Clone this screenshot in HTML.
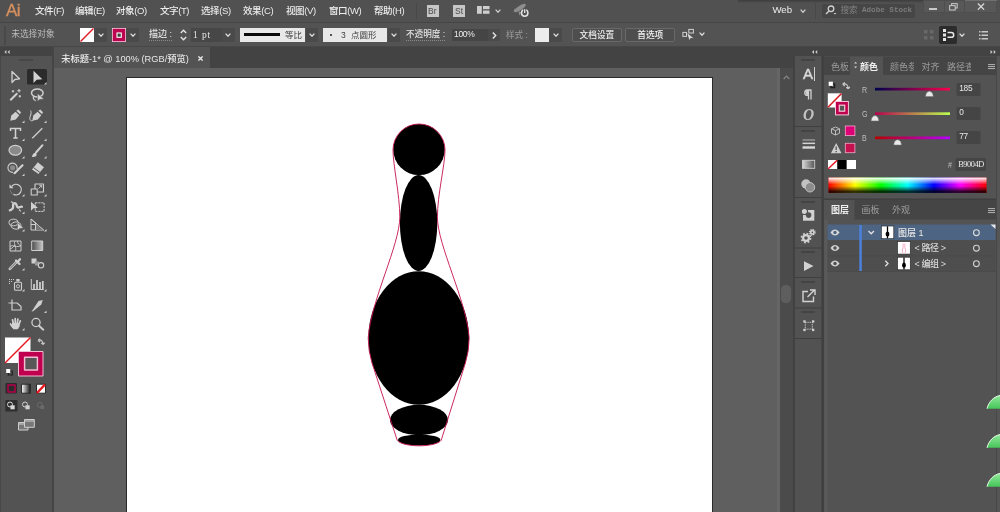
<!DOCTYPE html>
<html lang="zh-CN">
<head>
<meta charset="utf-8">
<title>未标题-1* @ 100% (RGB/预览)</title>
<style>
*{box-sizing:border-box;margin:0;padding:0}
html,body{width:1000px;height:512px;overflow:hidden;background:#535353}
body{position:relative;font-family:"Liberation Sans","Noto Sans CJK SC",sans-serif;font-size:11px;color:#dcdcdc;line-height:1}
.abs,.abs>*{position:absolute}
.abs{will-change:transform}
.t{position:absolute;white-space:nowrap;line-height:14px;height:14px}
#menubar{left:0;top:0;width:1000px;height:22px;background:#515151}
#ctrlbar{left:0;top:22px;width:1000px;height:25px;background:#535353;border-top:1px solid #454545;border-bottom:1px solid #474747}
#tabbar{left:53px;top:47px;width:740px;height:21px;background:#434343}
#tools{left:0;top:47px;width:54px;height:465px;background:#535353;border-right:2px solid #454545;box-shadow:inset 1px 0 0 #484848}
#canvas{left:54px;top:68px;width:726px;height:444px;background:#5f5f5f}
#vscroll{left:780px;top:68px;width:13px;box-shadow:-3px 0 0 #656565;height:444px;background:#4b4b4b}
#dock{left:793px;top:47px;width:207px;height:465px;background:#535353}
.m{top:4px;font-size:9.5px;letter-spacing:-.4px;color:#ececec;font-weight:500}
.c{top:5px;font-size:10px;color:#dcdcdc}
.chev{position:absolute;width:6px;height:4.300px;margin:.4px 0 0 .5px}
.dd{position:absolute;top:5px;height:14px;background:#4a4a4a}
.p0{font-size:9px;color:#9c9c9c}
.p1{font-size:9px;color:#f0f0f0;font-weight:bold}
.lb{font-size:8.400px;color:#bdbdbd;transform:scaleX(.85);transform-origin:0 0}
.nv{font-size:8.300px;letter-spacing:-.2px;color:#e8e8e8}
.hx{font-family:"Liberation Serif","Noto Serif CJK SC",serif;font-size:8.300px;letter-spacing:-.4px;color:#ececec}
.ly{font-size:9px;color:#dadada;font-weight:500}
</style>
</head>
<body>

<!-- MENU BAR -->
<div id="menubar" class="abs">
  <span class="t" style="left:6px;top:1.800px;font-size:17px;line-height:18px;height:18px;color:#d6905f;letter-spacing:-.5px;-webkit-text-stroke:.35px #d6905f">Ai</span>
  <span class="t m" style="left:35px">文件(F)</span>
  <span class="t m" style="left:75px">编辑(E)</span>
  <span class="t m" style="left:116px">对象(O)</span>
  <span class="t m" style="left:160px">文字(T)</span>
  <span class="t m" style="left:201px">选择(S)</span>
  <span class="t m" style="left:243px">效果(C)</span>
  <span class="t m" style="left:286px">视图(V)</span>
  <span class="t m" style="left:329px">窗口(W)</span>
  <span class="t m" style="left:374px">帮助(H)</span>
  <div style="left:416px;top:3px;width:1px;height:16px;background:#474747"></div>
  <div style="left:426.500px;top:5px;width:12.500px;height:12px;background:#c6c6c6"></div>
  <span class="t" style="left:428px;top:4px;font-size:8.500px;color:#4a4a4a">Br</span>
  <div style="left:452.800px;top:5px;width:12.500px;height:12px;background:#c6c6c6"></div>
  <span class="t" style="left:455px;top:4px;font-size:8.500px;color:#4a4a4a">St</span>
  <svg style="left:476.500px;top:6px" width="13" height="8" viewBox="0 0 13 8"><rect x="0" y="0" width="4.800" height="7.800" fill="#cdcdcd"/><rect x="6" y="0" width="6.500" height="3.200" fill="#cdcdcd"/><rect x="6" y="4.500" width="6.500" height="3.300" fill="#cdcdcd"/></svg>
  <svg class="chev" style="left:494.600px;top:8.500px" viewBox="0 0 7 5"><path d="M.7.8 3.5 3.8 6.3.8" fill="none" stroke="#d0d0d0" stroke-width="1.4"/></svg>
  <svg style="left:512px;top:2px" width="19" height="17" viewBox="512 2 19 17"><g fill="#8e8e8e"><ellipse cx="520" cy="8" rx="6.800" ry="2.200" transform="rotate(-33 520 8)"/><path d="M515 8.300l-1.600 3.200 3.800-.6zM518.500 11l.6 4.600 2.400-3.200z"/></g><circle cx="524.700" cy="13" r="3.200" fill="#535353" stroke="#e2e2e2" stroke-width="1.500"/><path d="M524.700 9v4" stroke="#535353" stroke-width="3"/><path d="M524.700 9.200v3.800" stroke="#e2e2e2" stroke-width="1.300"/></svg>

  <span class="t" style="left:772.500px;top:2.500px;font-size:9.700px;letter-spacing:-.1px;color:#ececec">Web</span>
  <svg class="chev" style="left:799.500px;top:9px" viewBox="0 0 7 5"><path d="M.7.8 3.5 3.8 6.3.8" fill="none" stroke="#d0d0d0" stroke-width="1.4"/></svg>
  <div style="left:815px;top:3px;width:1px;height:16px;background:#474747"></div>
  <div style="left:822px;top:4px;width:93px;height:14px;background:#464646;border-radius:2px"></div>
  <svg style="left:825px;top:5.300px" width="12" height="10" viewBox="0 0 12 10"><circle cx="6" cy="3.8" r="2.8" fill="none" stroke="#d0d0d0" stroke-width="1.3"/><path d="M4 6 1 9" stroke="#d0d0d0" stroke-width="1.5"/><path d="M8.5 8h3l-1.5 1.6z" fill="#d0d0d0"/></svg>
  <span class="t" style="left:840.500px;top:2.700px;font-size:8.600px;color:#828282">搜索</span><span class="t" style="left:862px;top:2.700px;font-size:7.600px;font-family:'Liberation Mono',monospace;font-weight:bold;color:#7c7c7c">Adobe Stock</span>
  <div style="left:738px;top:0;width:185px;height:2.500px;background:linear-gradient(#3c3c3c,rgba(60,60,60,0))"></div>
  <div style="left:922.500px;top:0;width:74.500px;height:13px;background:#585858;box-shadow:inset 0 0 0 1px #4e4e4e"></div>
  <div style="left:964px;top:0;width:33px;height:1px;background:#707070"></div>
  <div style="left:943.500px;top:0;width:1px;height:13px;background:#4e4e4e"></div><div style="left:963.500px;top:0;width:1px;height:13px;background:#4e4e4e"></div>
  <div style="left:929px;top:8px;width:8px;height:2px;background:#c8c8c8"></div>
  <svg style="left:949px;top:3.300px" width="8.800" height="7.900" viewBox="0 0 10 9"><rect x="3" y=".7" width="6.3" height="5" fill="none" stroke="#c8c8c8" stroke-width="1.2"/><rect x=".7" y="3" width="6.3" height="5" fill="#585858" stroke="#c8c8c8" stroke-width="1.2"/></svg>
  <svg style="left:976.500px;top:2.800px" width="8" height="7.200" viewBox="0 0 9 8"><path d="M1 .5 8 7.5M8 .5 1 7.5" stroke="#d8d8d8" stroke-width="1.4"/></svg>
</div>

<!-- CONTROL BAR -->
<div id="ctrlbar" class="abs">
  <div style="left:4px;top:3px;width:2px;height:19px;background:#494949"></div>
  <span class="t c" style="left:11.200px;top:4.200px;color:#bdbdbd;font-size:8.700px">未选择对象</span>
  <div class="dd" style="left:94px;width:13px"></div>
  <svg style="left:80px;top:5px" width="14" height="14" viewBox="0 0 14 14"><rect width="14" height="14" fill="#fff"/><path d="M.5 13.500 13.500.5" stroke="#e0202a" stroke-width="1.500"/></svg>
  <svg class="chev" style="left:97.500px;top:9.700px" viewBox="0 0 7 5"><path d="M.7.8 3.500 3.800 6.300.8" fill="none" stroke="#e4e4e4" stroke-width="1.400"/></svg>
  <div class="dd" style="left:126px;width:13px"></div>
  <svg style="left:112px;top:5px" width="14" height="14" viewBox="0 0 14 14"><rect width="14" height="14" fill="#f4c6d8"/><rect x=".8" y=".8" width="12.400" height="12.400" fill="#bb034f"/><rect x="5" y="5" width="4.300" height="4.300" fill="#444" stroke="#fff" stroke-width="1.100"/></svg>
  <svg class="chev" style="left:129.500px;top:9.700px" viewBox="0 0 7 5"><path d="M.7.8 3.500 3.800 6.300.8" fill="none" stroke="#e4e4e4" stroke-width="1.400"/></svg>
  <span class="t c" style="left:149px;font-size:9px;font-weight:500;color:#e2e2e2;border-bottom:1px dotted #8a8a8a;height:13px;line-height:13px">描边 :</span>
  <svg style="left:180px;top:6px" width="7" height="12" viewBox="0 0 7 12"><path d="M.8 4 3.500 1.200 6.200 4M.8 8 3.500 10.800 6.200 8" fill="none" stroke="#e6e6e6" stroke-width="1.300"/></svg>
  <div style="left:190.500px;top:5px;width:31px;height:14px;background:#474747"></div>
  <span class="t c" style="left:193px;font-family:'Liberation Serif','Noto Serif CJK SC',serif;font-size:9.500px;letter-spacing:.9px;color:#e6e6e6">1 pt</span>
  <div class="dd" style="left:222px;width:13px"></div>
  <svg class="chev" style="left:224.500px;top:9.700px" viewBox="0 0 7 5"><path d="M.7.8 3.500 3.800 6.300.8" fill="none" stroke="#e4e4e4" stroke-width="1.400"/></svg>
  <div style="left:240px;top:5px;width:65px;height:14px;background:#e8e8e8"></div>
  <div style="left:244px;top:10.400px;width:36px;height:2.600px;background:#0a0a0a"></div>
  <span class="t c" style="left:285px;color:#3c3c3c;font-size:8.500px">等比</span>
  <div class="dd" style="left:306px;width:12px"></div>
  <svg class="chev" style="left:308.700px;top:9.700px" viewBox="0 0 7 5"><path d="M.7.8 3.500 3.800 6.300.8" fill="none" stroke="#e4e4e4" stroke-width="1.400"/></svg>
  <div style="left:323px;top:5px;width:64px;height:14px;background:#e8e8e8"></div>
  <div style="left:329.700px;top:11px;width:2px;height:2px;background:#222;border-radius:1px"></div>
  <span class="t c" style="left:341px;color:#3c3c3c;font-size:8.500px">3</span>
  <span class="t c" style="left:351px;color:#3c3c3c;font-size:8.500px">点圆形</span>
  <div class="dd" style="left:388px;width:12px"></div>
  <svg class="chev" style="left:390.200px;top:9.700px" viewBox="0 0 7 5"><path d="M.7.8 3.500 3.800 6.300.8" fill="none" stroke="#e4e4e4" stroke-width="1.400"/></svg>
  <span class="t c" style="left:406px;font-size:8.600px;font-weight:500;color:#e2e2e2;border-bottom:1px dotted #8a8a8a;height:13px;line-height:13px">不透明度 :</span>
  <div style="left:452px;top:5.500px;width:36px;height:12.500px;background:#454545"></div>
  <span class="t c" style="left:454px;top:4px;font-size:8.500px;letter-spacing:-.3px;color:#ececec">100%</span>
  <div class="dd" style="left:488px;width:12px;top:5.500px;height:12.500px"></div>
  <svg style="left:492.300px;top:9px" width="5" height="7" viewBox="0 0 5 7"><path d="M.8.600 3.700 3.500 .8 6.400" fill="none" stroke="#e4e4e4" stroke-width="1.400"/></svg>
  <span class="t c" style="left:506px;color:#9c9c9c;font-size:8.600px">样式 :</span>
  <div style="left:535px;top:5px;width:14px;height:14px;background:#ececec"></div>
  <div class="dd" style="left:549px;width:13px"></div>
  <svg class="chev" style="left:552.800px;top:9.700px" viewBox="0 0 7 5"><path d="M.7.800 3.500 3.800 6.300.8" fill="none" stroke="#e4e4e4" stroke-width="1.400"/></svg>
  <div style="left:572px;top:4.500px;width:50px;height:14.500px;border:1px solid #696969;border-radius:2px;background:#4e4e4e"></div>
  <span class="t c" style="left:579.500px;font-size:8.700px;font-weight:500;color:#f0f0f0">文档设置</span>
  <div style="left:625px;top:4.500px;width:50px;height:14.500px;border:1px solid #696969;border-radius:2px;background:#4e4e4e"></div>
  <span class="t c" style="left:637.200px;font-size:8.700px;font-weight:500;color:#f0f0f0">首选项</span>
  <svg style="left:682px;top:4.500px" width="13" height="13" viewBox="0 0 13 13"><rect x=".9" y="4.400" width="3.600" height="4" fill="none" stroke="#d0d0d0" stroke-width="1"/><rect x="6.800" y="1.400" width="4.600" height="3.600" fill="none" stroke="#d0d0d0" stroke-width="1"/><path d="M5.300 5.300v7l1.800-1.700 2.600 1.400z" fill="#dcdcdc" transform="rotate(-18 5.300 5.300)"/></svg>
  <svg class="chev" style="left:698.200px;top:8.800px" viewBox="0 0 7 5"><path d="M.7.800 3.500 3.800 6.300.8" fill="none" stroke="#e4e4e4" stroke-width="1.400"/></svg>

  <svg style="left:924px;top:7px" width="10" height="10" viewBox="0 0 10 10"><g fill="#686868"><rect x="0" y="0" width="3.500" height="3.500"/><rect x="6" y="0" width="3.500" height="3.500"/><rect x="0" y="6" width="3.500" height="3.500"/><rect x="6" y="6" width="3.500" height="3.500"/></g></svg>
  <div style="left:939px;top:2.500px;width:18px;height:18px;background:#2c2c2c;border-radius:2px"></div>
  <svg style="left:942.500px;top:5.500px" width="12" height="12" viewBox="0 0 12 12"><g fill="#e6e6e6"><rect x="0" y="0" width="3" height="3"/><rect x="0" y="4.500" width="3" height="3"/><rect x="0" y="9" width="3" height="3"/></g><path d="M4.500 3.500h3.800a2.300 2.300 0 0 1 0 4.800H4.500" fill="none" stroke="#e6e6e6" stroke-width="1.500"/></svg>
  <svg class="chev" style="left:958.500px;top:9.700px" viewBox="0 0 7 5"><path d="M.7.800 3.500 3.800 6.300.8" fill="none" stroke="#e4e4e4" stroke-width="1.400"/></svg>
  <svg style="left:978.500px;top:7.500px" width="9" height="9" viewBox="0 0 9 9"><g fill="#c8c8c8"><rect x="0" y="0" width="1.500" height="1.500"/><rect x="0" y="3.500" width="1.500" height="1.500"/><rect x="0" y="7" width="1.500" height="1.500"/><rect x="2.500" y="0" width="6.500" height="1.500"/><rect x="2.500" y="3.500" width="6.500" height="1.500"/><rect x="2.500" y="7" width="6.500" height="1.500"/></g></svg>
</div>

<!-- TAB BAR -->
<div id="tabbar" class="abs">
  <div style="left:1px;top:0;width:156px;height:21px;background:#535353"></div>
  <span class="t" style="left:8.200px;top:4.600px;font-size:9.250px;font-weight:500;color:#e8e8e8">未标题-1* @ 100% (RGB/预览)</span>
  <svg style="left:144.500px;top:9px" width="5" height="5" viewBox="0 0 5 5"><path d="M.4.400 4.600 4.600M4.600.4.400 4.600" stroke="#ececec" stroke-width="1.300"/></svg>
</div>

<!-- CANVAS -->
<div id="canvas" class="abs">
  <div style="left:72px;top:9px;width:587px;height:440px;background:#fff;border:1px solid #2a2a2a"></div>
  <svg style="left:0;top:0" width="726" height="444" viewBox="54 68 726 444">
    <g fill="#000">
      <ellipse cx="419" cy="149.500" rx="25.800" ry="25.600"/>
      <ellipse cx="418.600" cy="223" rx="18.700" ry="48"/>
      <ellipse cx="418.700" cy="338" rx="50.300" ry="66.800"/>
      <ellipse cx="419" cy="420" rx="29" ry="15.200"/>
      <ellipse cx="419.200" cy="440" rx="21.200" ry="5.500"/>
    </g>
    <path d="M393 150 A26 26 0 0 1 445 150 C445 165 437.400 195 437.400 217 C437.400 245 466.400 300 469.200 338 A50.500 67 0 0 1 465.400 363 L441.600 439 A22.400 6.800 0 0 1 396.800 439 L372 363 A50.500 67 0 0 1 368.200 338 C371 300 399.800 245 399.800 217 C399.800 195 393 165 393 150 Z" fill="none" stroke="#c4124f" stroke-width=".9"/>
  </svg>
</div>

<!-- V SCROLL -->
<div id="vscroll" class="abs">
  <svg style="left:2.800px;top:6.500px" width="7" height="5" viewBox="0 0 7 5"><path d="M.7 4 3.500 1.200 6.300 4" fill="none" stroke="#858585" stroke-width="1.200"/></svg>
  <div style="left:1.300px;top:217.400px;width:10.200px;height:18px;background:#5e5e5e;border-radius:4.500px"></div>
</div>

<!-- TOOLS -->
<div id="tools" class="abs">
  <div style="left:0;top:0;width:52px;height:9px;background:#434343"></div>
  <svg style="left:4px;top:3px" width="6" height="4" viewBox="0 0 6 4"><path d="M2.4 0 .4 2l2 2zM5.6 0l-2 2 2 2z" fill="#cfcfcf"/></svg>
  <div style="left:19px;top:12px;width:14px;height:2px;background:#474747"></div>
  <svg style="left:0;top:0" width="52" height="465" viewBox="0 47 52 465" fill="none" stroke-linejoin="round">
  <!-- selected box -->
  <rect x="27" y="69" width="20" height="15.5" rx="1.5" fill="#2b2b2b"/>
  <!-- flyout triangles -->
  <g fill="#d0d0d0">
    <path d="M46.5 82v2.5H44z"/>
    <path d="M24.5 120.5v2.5H22z"/><path d="M46.500 120.5v2.5H44z"/>
    <path d="M24.5 138.5v2.5H22z"/><path d="M46.5 138.5v2.5H44z"/>
    <path d="M24.5 156v2.500H22z"/><path d="M46.5 156v2.5H44z"/>
    <path d="M24.5 173.5v2.500H22z"/><path d="M46.5 173.5v2.5H44z"/>
    <path d="M24.5 194v2.500H22z"/><path d="M46.5 194v2.5H44z"/>
    <path d="M24.5 211.500v2.5H22z"/>
    <path d="M24.5 229v2.5H22z"/><path d="M46.5 229v2.5H44z"/>
    <path d="M24.5 268v2.5H22z"/>
    <path d="M24.5 289v2.5H22z"/><path d="M46.5 289v2.5H44z"/>
    <path d="M46.5 310.500v2.5H44z"/>
    <path d="M24.5 328v2.5H22z"/>
  </g>
  <!-- row1: selection (hollow) / direct selection (filled) -->
  <path d="M12 71.500 L12 82.500 L14.800 79.500 L19.500 78.800 Z" stroke="#cfcfcf" stroke-width="1.300"/>
  <path d="M33.500 70.800 L33.500 83 L36.700 79.800 L42.300 79.200 Z" fill="#d2d2d2"/>
  <!-- row2: magic wand / lasso -->
  <path d="M10.300 100.200 L17.300 93.200" stroke="#cfcfcf" stroke-width="2"/>
  <path d="M19 89v3.400M17.300 90.700h3.400M13 90v2.400M11.800 91.200h2.400M19.800 95v2.400M18.600 96.200h2.400" stroke="#cfcfcf" stroke-width="1.100"/>
  <ellipse cx="37.300" cy="93" rx="5.800" ry="3.900" stroke="#cfcfcf" stroke-width="1.500"/>
  <path d="M33.800 96c-1.200 2-.3 4 2 4.600" stroke="#cfcfcf" stroke-width="1.200"/>
  <path d="M37.500 93.500 L37.500 101.500 L39.600 99.400 L44 99 Z" fill="#d2d2d2" stroke="#535353" stroke-width=".5"/>
  <!-- row3: pen / curvature -->
  <path d="M10.300 120.800 L11.300 115.500 L15.500 111.800 L19.300 115.200 L15.800 119.600 Z" fill="#cfcfcf"/>
  <path d="M16.300 110.800 L18.300 109.600 L21 112.300 L20 114.200 Z" fill="#cfcfcf"/>
  <path d="M32.300 120.800 L33.300 115.500 L37.500 111.800 L41.300 115.200 L37.800 119.600 Z" fill="#cfcfcf"/>
  <path d="M38.300 110.800 L40.300 109.600 L43 112.300 L42 114.200 Z" fill="#cfcfcf"/>
  <path d="M30.500 110.500c2 3-1.500 6-.5 9 .6 1.500 2 1.500 3 1" stroke="#cfcfcf" stroke-width="1"/>
  <!-- row4: T / line -->
  <path d="M10.500 131v-2.500h10v2.500M15.500 128.500v9.500M13.300 138h4.400" stroke="#d2d2d2" stroke-width="1.500" stroke-linejoin="miter"/>
  <path d="M32.300 138.300 L42.300 128.200" stroke="#cfcfcf" stroke-width="1.300"/>
  <!-- row5: ellipse / brush -->
  <ellipse cx="15.300" cy="150.300" rx="6.300" ry="4.900" fill="#8a8a8a" stroke="#cfcfcf" stroke-width="1.200"/>
  <path d="M36 152.500 L42.500 145.200" stroke="#cfcfcf" stroke-width="2" stroke-linecap="round"/>
  <path d="M32 157c.3-2.500 1.600-4.200 3.600-4.300 1.400 1.200 1.300 2.700.2 3.600-1.100.8-2.500.9-3.800.7z" fill="#d2d2d2"/>
  <!-- row6: shaper / eraser -->
  <path d="M13 172.300 a4.600 4.600 0 1 1 4-3.500" stroke="#cfcfcf" stroke-width="1.100"/>
  <circle cx="12.600" cy="167.800" r="2.600" fill="#8a8a8a"/>
  <path d="M14.500 173.200 L22.500 165.300" stroke="#d2d2d2" stroke-width="2.200" stroke-linecap="round"/>
  <path d="M37.800 162.300 L44 167.200 L38.500 174 L32 169.400 Z" fill="#cfcfcf"/>
  <path d="M33.800 167.800 L39.800 172.300" stroke="#535353" stroke-width="1"/>
  <!-- row7: rotate / scale -->
  <path d="M11.800 186.300 A5.300 5.300 0 1 1 13.500 194.300" stroke="#cfcfcf" stroke-width="1.300"/><path d="M13.500 194.300 A5.300 5.300 0 0 1 10.200 190" stroke="#9a9a9a" stroke-width="1.100" stroke-dasharray="1 1"/>
  <path d="M9.500 184.300v4h4z" fill="#cfcfcf"/>
  <rect x="35" y="184" width="8.500" height="8" stroke="#cfcfcf" stroke-width="1.100"/>
  <rect x="31.200" y="189" width="6" height="6" fill="#535353" stroke="#cfcfcf" stroke-width="1.100"/>
  <path d="M38.500 188.500l3-3M39.300 185.300h2.400v2.400" stroke="#cfcfcf" stroke-width=".9"/>
  <!-- row8: warp / free transform -->
  <path d="M9.800 210.300c2.600-.6 3.600-2.400 3.300-4.600-.3-1.700 1-3 2.500-2.200 1.500.8.600 3.300 2.300 3.900 1.700.6 2.600-1.200 4-.6" stroke="#cfcfcf" stroke-width="2.300" stroke-linecap="round"/>
  <path d="M13 203l-1.800-1.500M19 209.500l1.800 1.800" stroke="#cfcfcf" stroke-width="1.100"/>
  <rect x="35.300" y="202.800" width="8.800" height="8.600" stroke="#cfcfcf" stroke-width="1" stroke-dasharray="2.200 .8"/>
  <path d="M31 201.800 L31 210.800 L33.500 208.300 L38 208 Z" fill="#d2d2d2"/>
  <!-- row9: shape builder / perspective -->
  <ellipse cx="13.500" cy="222.500" rx="4.500" ry="3.300" stroke="#cfcfcf" stroke-width="1"/>
  <ellipse cx="16" cy="225.500" rx="5" ry="3.600" stroke="#cfcfcf" stroke-width="1"/>
  <path d="M17.500 222.500 L17.500 230.500 L19.600 228.400 L23.500 228 Z" fill="#d2d2d2" stroke="#535353" stroke-width=".4"/>
  <path d="M31 219v11l12.500 0zM31 224.500l6.300 0M35.500 222.800v7.200M31 219l12.500 11" stroke="#cfcfcf" stroke-width="1"/>
  <path d="M36 223.500 L43 230 L36 230z" fill="#777"/>
  <!-- row10: mesh / gradient -->
  <rect x="10" y="241" width="11" height="10" stroke="#cfcfcf" stroke-width="1"/>
  <path d="M10 246.500c3-2.500 7 2 11-1M15 241c-2 3.500 2.500 6.500 0 10M10 249c3-1 4-3 5-4M17.500 241c0 3 2 4 3.500 5" stroke="#cfcfcf" stroke-width=".9"/>
  <rect x="31.700" y="241" width="11" height="9.500" fill="url(#tg)" stroke="#cfcfcf" stroke-width="1"/>
  <!-- row11: eyedropper / blend -->
  <path d="M9.800 268.800 L16.500 262" stroke="#cfcfcf" stroke-width="2.600" stroke-linecap="round"/>
  <path d="M10.300 268.300 L16 262.500" stroke="#535353" stroke-width=".9" stroke-linecap="round"/>
  <path d="M16 260.500l3.500 3.500M17.500 262 L20 259.300" stroke="#cfcfcf" stroke-width="2.300" stroke-linecap="round"/>
  <rect x="31.500" y="258.500" width="5" height="5" fill="#cfcfcf"/>
  <rect x="35" y="261.500" width="4" height="4" fill="#9a9a9a"/>
  <circle cx="41" cy="265.300" r="2.700" fill="#535353" stroke="#cfcfcf" stroke-width="1.100"/>
  <!-- row12: symbol sprayer / graph -->
  <rect x="14.500" y="282.300" width="7" height="8" rx="1" stroke="#cfcfcf" stroke-width="1.100"/>
  <rect x="16.300" y="279" width="3.300" height="2.500" fill="#cfcfcf"/>
  <circle cx="18" cy="286.300" r="1.600" stroke="#cfcfcf" stroke-width=".9"/>
  <path d="M9 279.500h1M11 279.500h1M13 279.500h1M9 281.500h1M11 281.500h1M9 283.500h1" stroke="#cfcfcf" stroke-width="1"/>
  <path d="M31.300 279v10.500h12.500" stroke="#cfcfcf" stroke-width="1"/>
  <path d="M34 289v-5M37 289v-9M40 289v-7M42.800 289v-8" stroke="#cfcfcf" stroke-width="1.700"/>
  <!-- row13: artboard / slice -->
  <path d="M12 299.500v10.500h9M8.500 303h8.500l4 3.500v4" stroke="#cfcfcf" stroke-width="1.200"/>
  <path d="M31.500 311.800 L38.500 301 L42.800 300 L41.300 304.500 L33.500 311 Z" fill="#cfcfcf"/>
  <!-- row14: hand / zoom -->
  <path d="M12.200 322.800 L19.900 323.200 L19.600 326.300 L17.800 329.200 L13.300 329.200 L11.800 326.800 Z" fill="#d2d2d2"/>
  <path d="M13.300 323.500 L12.500 319.800M15.300 323 L15.200 318.500M17.300 323 L17.900 319M19.100 324 L20.300 320.800M12.600 327 L10.500 324" stroke="#d2d2d2" stroke-width="1.700" stroke-linecap="round"/>
  <circle cx="36" cy="322.500" r="4.100" stroke="#cfcfcf" stroke-width="1.300"/>
  <path d="M39 325.700 L43.300 329.700" stroke="#cfcfcf" stroke-width="1.900" stroke-linecap="round"/>
  <!-- fill / stroke -->
  <rect x="5" y="337.500" width="25.500" height="25.500" fill="#fff"/>
  <path d="M5 363 L30.500 337.500" stroke="#e8161e" stroke-width="1.500"/>
  <path d="M38 340.500c3-1.500 5 .5 5 4M38 340.500l2-1.800M38 340.500l2.200 1.400M43 344.500l-1.700-1.600M43 344.500l1.600-1.800" stroke="#c4c4c4" stroke-width="1.300"/>
  <rect x="18.500" y="351.500" width="24.500" height="24.500" fill="#c0004f" stroke="#f2bcd2" stroke-width="1"/>
  <rect x="24.600" y="357.200" width="12.800" height="12.800" fill="#585858" stroke="#f0bccf" stroke-width="1.500"/>
  <rect x="8.300" y="371" width="4" height="4" fill="#535353" stroke="#222" stroke-width="1.200"/>
  <rect x="6.200" y="369" width="4" height="4" fill="#fff"/>
  <!-- color / gradient / none -->
  <rect x="5.500" y="383" width="11.500" height="10.500" rx="1" fill="#2b2b2b"/>
  <rect x="8" y="385" width="7" height="7" stroke="#b9004d" stroke-width="1.400"/>
  <rect x="21.500" y="384.200" width="9" height="9" fill="url(#tg2)" stroke="#2b2b2b" stroke-width="1"/>
  <rect x="36.500" y="384.200" width="9" height="9" fill="#fff" stroke="#2b2b2b" stroke-width="1"/>
  <path d="M37 393 L45 384.500" stroke="#e8161e" stroke-width="2.400"/>
  <!-- draw modes -->
  <rect x="5.300" y="400" width="12.200" height="11.600" rx="1" fill="#2f2f2f"/>
  <circle cx="10" cy="404.500" r="2.500" stroke="#d8d8d8" stroke-width="1" fill="#2f2f2f"/>
  <rect x="10.500" y="405.300" width="4.200" height="4" fill="#d8d8d8"/>
  <circle cx="25" cy="404.500" r="2.500" stroke="#cfcfcf" stroke-width="1"/>
  <rect x="25.500" y="405.300" width="4.200" height="4" fill="#cfcfcf"/>
  <circle cx="39.800" cy="404.800" r="2.500" stroke="#6a6a6a" stroke-width="1"/><rect x="40.300" y="405.500" width="3.800" height="3.600" fill="#6a6a6a"/>
  <!-- screen mode -->
  <rect x="18.500" y="422.500" width="9.500" height="7.500" fill="#777" stroke="#cfcfcf" stroke-width="1"/>
  <rect x="24.500" y="419.500" width="9.800" height="7.800" fill="#777" stroke="#cfcfcf" stroke-width="1"/>
  <path d="M24.500 421h9.800M18.500 424h6" stroke="#cfcfcf" stroke-width="1.200"/>
  <defs>
    <linearGradient id="tg" x1="0" x2="1" y1="0" y2="0"><stop offset="0" stop-color="#4a4a4a"/><stop offset="1" stop-color="#c8c8c8"/></linearGradient>
    <linearGradient id="tg2" x1="0" x2="1" y1="0" y2="0"><stop offset="0" stop-color="#fff"/><stop offset="1" stop-color="#111"/></linearGradient>
  </defs>
</svg>

</div>

<!-- DOCK -->
<div id="dock" class="abs">
  <div style="left:0;top:0;width:207px;height:9px;background:#434343"></div>
<svg style="left:0;top:0" width="207" height="465" viewBox="793 47 207 465" fill="none">
  <defs>
    <linearGradient id="gR" x1="0" x2="1"><stop offset="0" stop-color="#00004d"/><stop offset="1" stop-color="#ff004d"/></linearGradient>
    <linearGradient id="gG" x1="0" x2="1"><stop offset="0" stop-color="#b9004d"/><stop offset="1" stop-color="#b9ff4d"/></linearGradient>
    <linearGradient id="gB" x1="0" x2="1"><stop offset="0" stop-color="#b90000"/><stop offset="1" stop-color="#b900ff"/></linearGradient>
    <linearGradient id="gS" x1="0" x2="1"><stop offset="0" stop-color="#ff0000"/><stop offset=".167" stop-color="#ffff00"/><stop offset=".333" stop-color="#00ff00"/><stop offset=".5" stop-color="#00ffff"/><stop offset=".667" stop-color="#0000ff"/><stop offset=".833" stop-color="#ff00ff"/><stop offset="1" stop-color="#ff0000"/></linearGradient>
    <linearGradient id="gV" x1="0" x2="0" y1="0" y2="1"><stop offset="0" stop-color="#fff" stop-opacity="1"/><stop offset=".45" stop-color="#fff" stop-opacity="0"/><stop offset=".55" stop-color="#000" stop-opacity="0"/><stop offset="1" stop-color="#000" stop-opacity="1"/></linearGradient>
    <linearGradient id="gI" x1="0" x2="1"><stop offset="0" stop-color="#d8d8d8"/><stop offset="1" stop-color="#555"/></linearGradient>
    <linearGradient id="leaf" x1="0" x2="0" y1="0" y2="1"><stop offset="0" stop-color="#8fe79a"/><stop offset="1" stop-color="#46c659"/></linearGradient>
  </defs>
  <!-- header collapse arrows -->
  <path d="M814 50l-2 2 2 2zM817.200 50l-2 2 2 2z" fill="#cfcfcf"/>
  <path d="M990.500 50l2 2-2 2zM993.700 50l2 2-2 2z" fill="#cfcfcf"/>
  <!-- icon column -->
  <rect x="793" y="56" width="30" height="456" fill="#525252"/>
  <rect x="792.300" y="56" width="2.500" height="456" fill="#404040"/>
  <rect x="821.300" y="56" width="3" height="456" fill="#404040"/>
  <g fill="#444">
    <rect x="801" y="59" width="14" height="2"/>
    <rect x="801" y="130" width="14" height="2"/>
    <rect x="801" y="201" width="14" height="2"/>
    <rect x="801" y="251" width="14" height="2"/>
    <rect x="801" y="281" width="14" height="2"/>
    <rect x="801" y="311" width="14" height="2"/>
  </g>
  <g fill="#3f3f3f">
    <rect x="794" y="126" width="28" height="1"/>
    <rect x="794" y="197" width="28" height="1"/>
    <rect x="794" y="247.500" width="28" height="1"/>
    <rect x="794" y="277" width="28" height="1"/>
    <rect x="794" y="307.500" width="28" height="1"/>
    <rect x="794" y="338" width="28" height="1"/>
  </g>
  <!-- ¶ -->
  <path d="M808.500 99.500v-9.500M811 99.500v-9.500M811.500 90h-4a2.700 2.700 0 0 0 0 5.400h1" stroke="#d2d2d2" stroke-width="1.300"/>
  <path d="M807.500 90.300a2.500 2.500 0 0 0 0 4.800h1v-4.800z" fill="#d2d2d2"/>
  <!-- stroke icon -->
  <rect x="802.500" y="139.600" width="12.500" height=".8" fill="#cfcfcf"/>
  <rect x="802.500" y="142.600" width="12.500" height="1.500" fill="#d4d4d4"/>
  <rect x="802.500" y="146.300" width="12.500" height="2.400" fill="#d8d8d8"/>
  <!-- gradient icon -->
  <rect x="802.500" y="160.300" width="12.200" height="8" fill="url(#gI)" stroke="#cfcfcf" stroke-width=".9"/>
  <!-- transparency -->
  <circle cx="806" cy="184" r="4.700" fill="#c2c2c2"/>
  <circle cx="810" cy="187.300" r="4.700" fill="#8c8c8c" stroke="#c8c8c8" stroke-width=".9"/>
  <!-- libraries -->
  <rect x="803" y="210" width="11.300" height="10.700" fill="#d2d2d2"/>
  <circle cx="804.400" cy="211.400" r="3.700" fill="#525252"/>
  <circle cx="804.400" cy="211.400" r="2.500" fill="#d2d2d2"/>
  <circle cx="808.600" cy="215.100" r="2.800" fill="#525252"/>
  <!-- gears -->
  <circle cx="806" cy="238" r="2.900" stroke="#d2d2d2" stroke-width="2.200"/>
  <circle cx="806" cy="238" r="4.600" stroke="#d2d2d2" stroke-width="1.600" stroke-dasharray="1.800 1.810"/>
  <circle cx="812.300" cy="232.300" r="1.700" stroke="#d2d2d2" stroke-width="1.700"/>
  <circle cx="812.300" cy="232.300" r="2.900" stroke="#d2d2d2" stroke-width="1.200" stroke-dasharray="1.150 1.130"/>
  <!-- play -->
  <path d="M804 261.300v9.600l9.500-4.800z" fill="#d2d2d2"/>
  <!-- export -->
  <path d="M808 291.500h-5v10h10.500v-5" stroke="#d2d2d2" stroke-width="1.400"/>
  <path d="M807.500 297l7-7M810 290h5v5" stroke="#d2d2d2" stroke-width="1.400"/>
  <!-- artboards -->
  <rect x="805.300" y="322.300" width="7" height="6.800" stroke="#d2d2d2" stroke-width="1" stroke-dasharray="1.200 1"/>
  <g fill="#d2d2d2"><rect x="803.300" y="320.300" width="2.300" height="2.300"/><rect x="812" y="320.300" width="2.300" height="2.300"/><rect x="803.300" y="328.800" width="2.300" height="2.300"/><rect x="812" y="328.800" width="2.300" height="2.300"/></g>

  <!-- COLOR PANEL -->
  <rect x="824" y="56" width="172" height="143" fill="#535353"/>
  <rect x="824" y="56.500" width="172" height="18.500" fill="#454545"/>
  <rect x="850" y="56.500" width="33" height="19" fill="#535353"/>
  <path d="M854 63.500l1.600-1.800 1.600 1.800zM854 66.500l1.600 1.800 1.600-1.800z" fill="#cfcfcf"/>
  <g fill="#a9a9a9"><rect x="988" y="64" width="7" height="1.100"/><rect x="988" y="66" width="7" height="1.100"/><rect x="988" y="68" width="7" height="1.100"/></g>
  <!-- default fill/stroke icon, swap -->
  <rect x="831" y="84" width="3.600" height="3.600" fill="#535353" stroke="#1e1e1e" stroke-width="1.300"/>
  <rect x="828.700" y="81.700" width="4.200" height="4.200" fill="#fff"/>
  <path d="M843 84.300c3-1.200 5 .8 5.200 4M842.700 84.300l2-1.900M842.700 84.300l2.100 1.600M848.200 88.800l-1.900-1.600M848.200 88.800l1.600-2" stroke="#cacaca" stroke-width="1.200"/>
  <rect x="827.800" y="93.300" width="13.800" height="14.200" fill="#fff"/>
  <path d="M828 107.300 L841.500 93.500" stroke="#d81c26" stroke-width="1.600"/>
  <rect x="835.500" y="101.500" width="12.900" height="13.400" fill="#c0004f" stroke="#f4c8d8" stroke-width="1"/>
  <rect x="839.300" y="105.200" width="5.400" height="6" fill="#585858" stroke="#f4c8d8" stroke-width="1.200"/>
  <!-- sliders -->
  <rect x="875" y="87.800" width="75" height="2.700" fill="url(#gR)"/>
  <rect x="875" y="112.300" width="75" height="2.700" fill="url(#gG)"/>
  <rect x="875" y="136.500" width="75" height="2.700" fill="url(#gB)"/>
  <g fill="#e8e8e8" stroke="#777" stroke-width=".5">
    <path d="M925.600 96.500a3.800 5.300 0 0 1 7.600 0z"/>
    <path d="M871.200 120.900a3.800 5.300 0 0 1 7.600 0z"/>
    <path d="M893.800 145a3.800 5.300 0 0 1 7.600 0z"/>
  </g>
  <g fill="#454545">
    <rect x="956.500" y="83" width="24" height="13" rx="1.500"/>
    <rect x="956.500" y="107" width="24" height="13" rx="1.500"/>
    <rect x="956.500" y="131" width="24" height="13" rx="1.500"/>
    <rect x="955.500" y="158" width="30.500" height="13" rx="1.500"/>
  </g>
  <!-- cube + swatch -->
  <path d="M835.500 127l4 1.800v4.400l-4 1.800-4-1.800v-4.400zM831.500 128.800l4 1.800 4-1.800M835.500 130.600v4.400" stroke="#bdbdbd" stroke-width="1"/>
  <rect x="845.300" y="126" width="9.600" height="9.600" fill="#dd0077" stroke="#f0a8c8" stroke-width=".8"/>
  <path d="M836.200 143l5.300 10.300h-10.600z" fill="#cfcfcf"/>
  <path d="M836.200 146.500v3.500M836.200 151v1.200" stroke="#535353" stroke-width="1.300"/>
  <rect x="845.300" y="143.300" width="9.600" height="9.400" fill="#c5124f" stroke="#f0a8c8" stroke-width=".8"/>
  <!-- none/black/white -->
  <rect x="828" y="160" width="9.400" height="9" fill="#fff"/>
  <path d="M828.200 168.800l9-8.600" stroke="#e8161e" stroke-width="1.400"/>
  <rect x="837.400" y="160" width="9.300" height="9" fill="#000"/>
  <rect x="846.700" y="160" width="9.300" height="9" fill="#fff"/>
  <!-- spectrum -->
  <rect x="828.500" y="177.600" width="158" height="15.200" fill="url(#gS)"/>
  <rect x="828.500" y="177.600" width="158" height="15.200" fill="url(#gV)"/>

  <!-- LAYERS PANEL -->
  <rect x="824" y="198.500" width="172" height="1.500" fill="#3f3f3f"/>
  <rect x="824" y="200" width="172" height="312" fill="#535353"/>
  <rect x="824.300" y="220" width="3.200" height="292" fill="#5a5a5a"/>
  <rect x="824" y="200" width="172" height="19.500" fill="#454545"/>
  <rect x="824" y="200" width="30.500" height="20" fill="#535353"/>
  <g fill="#a9a9a9"><rect x="988" y="208" width="7" height="1.100"/><rect x="988" y="210" width="7" height="1.100"/><rect x="988" y="212" width="7" height="1.100"/></g>
  <rect x="827.500" y="224.500" width="168" height="15.700" fill="#4d6582"/>
  <rect x="827.500" y="240.200" width="168" height="31.300" fill="#4e4e4e"/>
  <rect x="827.500" y="255.500" width="168" height=".7" fill="#484848"/>
  <rect x="827.500" y="271.300" width="168" height=".7" fill="#484848"/>
  <rect x="859.300" y="225" width="2.500" height="46" fill="#4b80dc"/>
  <path d="M990.500 224.500h5v4.500z" fill="#e8e8e8"/>
  <!-- eyes -->
  <g id="eye1"><path d="M830.500 232.500c2.500-4 6.500-4 9 0-2.500 4-6.500 4-9 0z" fill="#d8d8d8"/><circle cx="835" cy="232.500" r="1.700" fill="#4d6582"/></g>
  <path d="M830.500 248c2.500-4 6.500-4 9 0-2.500 4-6.500 4-9 0z" fill="#d0d0d0"/><circle cx="835" cy="248" r="1.700" fill="#4e4e4e"/>
  <path d="M830.500 263.500c2.500-4 6.500-4 9 0-2.500 4-6.500 4-9 0z" fill="#d0d0d0"/><circle cx="835" cy="263.500" r="1.700" fill="#4e4e4e"/>
  <!-- chevrons -->
  <path d="M868.500 231l2.700 2.800 2.700-2.800" stroke="#e0e0e0" stroke-width="1.300"/>
  <path d="M885.300 260.800l2.700 2.700-2.700 2.700" stroke="#e0e0e0" stroke-width="1.300"/>
  <!-- thumbs -->
  <rect x="881.300" y="226" width="12.500" height="12.700" fill="#fff" stroke="#2a2a2a" stroke-width=".7"/>
  <path d="M887.500 226.300v12.100" stroke="#000" stroke-width="1.300"/><ellipse cx="887.500" cy="234" rx="1.900" ry="2.600" fill="#000"/>
  <rect x="897.500" y="241.500" width="12.800" height="12.600" fill="#fff" stroke="#2a2a2a" stroke-width=".7"/>
  <path d="M903.200 243.500c-.3 2.500.4 3.500-.6 5.500-.6 1.500-.2 3 .4 4M904.800 243.500c.3 2.500-.4 3.500.6 5.500.6 1.500.2 3-.4 4" stroke="#ee8aa9" stroke-width=".7"/>
  <rect x="897.500" y="257.200" width="12.800" height="12.600" fill="#fff" stroke="#2a2a2a" stroke-width=".7"/>
  <path d="M904 257.500v12" stroke="#000" stroke-width="1.300"/><ellipse cx="904" cy="265.200" rx="1.900" ry="2.600" fill="#000"/>
  <!-- target circles -->
  <circle cx="976.400" cy="232.700" r="2.900" stroke="#dcdcdc" stroke-width="1.100"/>
  <circle cx="976.400" cy="248.200" r="2.900" stroke="#d0d0d0" stroke-width="1.100"/>
  <circle cx="976.400" cy="263.700" r="2.900" stroke="#d0d0d0" stroke-width="1.100"/>
  <!-- right edge strip -->
  <rect x="996" y="56" width="4" height="456" fill="#555"/><rect x="996" y="56" width="1" height="456" fill="#484848"/>
  <!-- leaves -->
  <g>
    <path d="M987 408.700c2-7.500 6.800-12 13-13.200v13.200z" fill="url(#leaf)"/><path d="M987 408.700c2-7.500 6.800-12 13-13.200" stroke="#e8ffe8" stroke-width="1"/>
    <path d="M987 447.800c2-7.500 6.800-12 13-13.200v13.200z" fill="url(#leaf)"/><path d="M987 447.800c2-7.500 6.800-12 13-13.200" stroke="#e8ffe8" stroke-width="1"/>
    <path d="M987 486.700c2-7.500 6.800-12 13-13.200v13.200z" fill="url(#leaf)"/><path d="M987 486.700c2-7.500 6.800-12 13-13.200" stroke="#e8ffe8" stroke-width="1"/>
  </g>
</svg>
<span class="t" style="left:10px;top:19px;font-size:15px;line-height:16px;height:16px;color:#d8d8d8;-webkit-text-stroke:.5px #d8d8d8">A</span>
<div style="left:21px;top:20px;width:1.200px;height:13.500px;background:#cfcfcf"></div>
<span class="t" style="left:9.500px;top:59px;font-family:'Liberation Serif',serif;font-style:italic;font-weight:bold;font-size:17.500px;line-height:16px;height:16px;color:#c4c4c4;transform:scaleX(.88);transform-origin:0 0">O</span>
<span class="t p0" style="left:38px;top:12.700px">色板</span>
<span class="t p1" style="left:67px;top:12.700px">颜色</span>
<span class="t p0" style="left:97px;top:12.700px;width:24px;overflow:hidden">颜色参</span>
<span class="t p0" style="left:128.500px;top:12.700px">对齐</span>
<span class="t p0" style="left:154px;top:12.700px;width:23.500px;overflow:hidden">路径查</span>
<span class="t lb" style="left:69px;top:36px">R</span>
<span class="t lb" style="left:69px;top:60px">G</span>
<span class="t lb" style="left:69px;top:84px">B</span>
<span class="t lb" style="left:154.500px;top:110.500px">#</span>
<span class="t nv" style="left:166.200px;top:33.700px">185</span>
<span class="t nv" style="left:166.200px;top:57.700px">0</span>
<span class="t nv" style="left:166.200px;top:81.700px">77</span>
<span class="t hx" style="left:165.200px;top:110.500px">B9004D</span>
<span class="t p1" style="left:38px;top:156px">图层</span>
<span class="t p0" style="left:68.500px;top:156px">画板</span>
<span class="t p0" style="left:99px;top:156px">外观</span>
<span class="t ly" style="left:105px;top:178.500px;color:#e8e8e8">图层 1</span>
<span class="t ly" style="left:121.500px;top:194px;letter-spacing:-.4px">&lt; 路径 &gt;</span>
<span class="t ly" style="left:121.500px;top:209.500px;letter-spacing:-.4px">&lt; 编组 &gt;</span>
</div>

</body>
</html>
